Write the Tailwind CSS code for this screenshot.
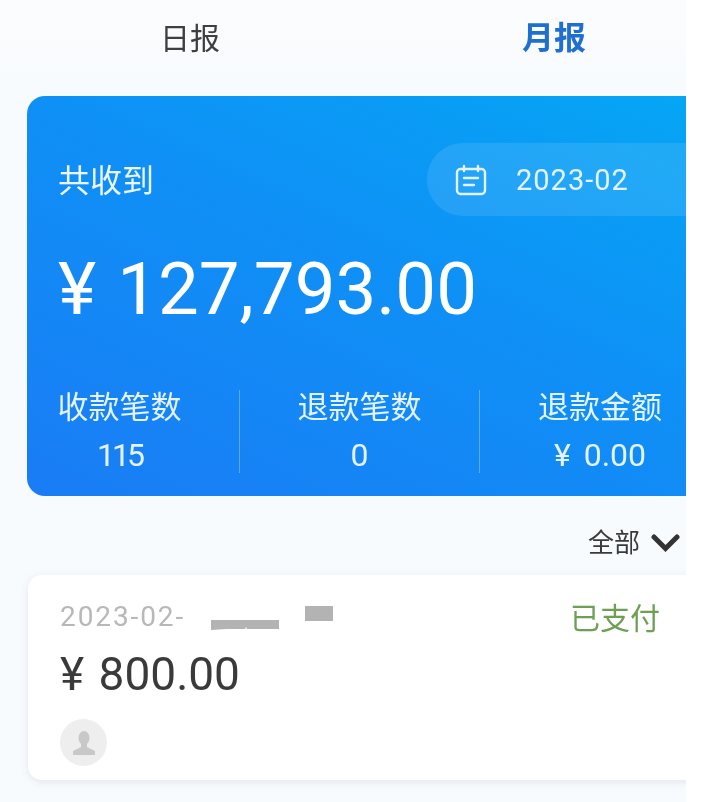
<!DOCTYPE html>
<html lang="zh-CN">
<head>
  <meta charset="UTF-8">
  <meta name="viewport" content="width=device-width, initial-scale=1.0">
  <title>月报</title>
  <script src="https://cdn.jsdelivr.net/npm/@tailwindcss/browser@4"></script>
</head>
<body class="bg-white font-['Roboto','Noto_Sans_CJK_SC',sans-serif]">
<div class="w-[686px] h-[802px] overflow-hidden bg-gradient-to-b from-[#fbfcfd] to-[#f8fbfe] to-[10%] blur-[0.5px]">

  <!-- tabs -->
  <div class="flex h-[96px] w-[728px] ml-2 pb-5">
    <div class="w-[364px] flex items-center justify-center text-[30px] text-[#3f3f3f]">日报</div>
    <div class="w-[364px] flex items-center justify-center text-[32px] font-bold text-[#1f6fd0]">月报</div>
  </div>

  <!-- summary card -->
  <div class="ml-[27px] w-[680px] h-[400px] rounded-[18px] bg-[linear-gradient(205deg,#05a6f5,#0f90f6_45%,#1a7cf5)] text-white pl-[31px] pt-[47px]">
    <div class="flex items-center justify-between h-[73px]">
      <div class="text-[32px] pt-[2px] text-[#eaf5ff]">共收到</div>
      <div class="flex items-center w-[280px] h-[73px] rounded-l-[36px] bg-white/10 pl-[28px] text-[#e4f3ff]">
        <svg class="w-[32px] h-[32px]" viewBox="0 0 32 32" fill="none" stroke="currentColor" stroke-width="2.4" stroke-linecap="round" stroke-linejoin="round">
          <rect x="2" y="5" width="28" height="25" rx="3.5"/>
          <path d="M9 2v5M23 2v5M9 14h14M9 21h10"/>
        </svg>
        <span class="ml-[29px] pt-[2px] text-[29px] tracking-[1px]">2023-02</span>
      </div>
    </div>
    <div class="mt-[30px] h-[88px] flex items-center text-[72.6px] leading-none text-white whitespace-pre [word-spacing:3px]">¥ 127,793.00</div>
    <div class="mt-[56px] -ml-[58px] flex">
      <div class="w-[240px] shrink-0 h-[83px] border-r border-white/30 flex flex-col items-center justify-between text-[#e4f3ff]">
        <div class="text-[31px] leading-[36px]">收款笔数</div>
        <div class="text-[32px] leading-[36px] tracking-[-3px]">115</div>
      </div>
      <div class="w-[240px] shrink-0 h-[83px] border-r border-white/30 flex flex-col items-center justify-between text-[#e4f3ff]">
        <div class="text-[31px] leading-[36px]">退款笔数</div>
        <div class="text-[32px] leading-[36px]">0</div>
      </div>
      <div class="w-[240px] shrink-0 h-[83px] flex flex-col items-center justify-between text-[#e4f3ff]">
        <div class="text-[31px] leading-[36px]">退款金额</div>
        <div class="text-[32px] leading-[36px] whitespace-pre [word-spacing:5px]">¥ 0.00</div>
      </div>
    </div>
  </div>

  <!-- filter -->
  <div class="h-[79px] pt-[15px] flex items-center justify-end pr-[6px] text-[#3a3a3a]">
    <span class="text-[26px]">全部</span>
    <svg class="ml-[11px] w-[29px] h-[18px]" viewBox="0 0 29 18" fill="none" stroke="#333" stroke-width="5" stroke-linecap="round" stroke-linejoin="miter">
      <path d="M3 3l11.500 11.500L26 3"/>
    </svg>
  </div>

  <!-- record -->
  <div class="ml-[28px] w-[680px] h-[205px] rounded-[14px] bg-white shadow-[0_2px_8px_rgba(150,160,175,0.22)] pl-[32px] pt-[24px]">
    <div class="flex items-start justify-between w-[600px] h-[40px]">
      <div class="flex items-start">
        <span class="text-[28px] leading-[36px] tracking-[1.9px] text-[#b8b8b8]">2023-02-</span>
        <svg class="ml-[26px] mt-[7px]" width="122" height="24" viewBox="0 0 122 24" fill="#b3b3b3">
          <path d="M0 14h68v9H36l-1-2-1 2H16L0 24z"/>
          <rect x="94" y="0" width="28" height="15"/>
        </svg>
      </div>
      <span class="text-[30px] leading-[40px] text-[#6f9f55]">已支付</span>
    </div>
    <div class="mt-[8px] h-[54px] flex items-center text-[46px] leading-none text-[#3a3a3a] whitespace-pre [word-spacing:3px]">¥ 800.00</div>
    <div class="mt-[18px] w-[47px] h-[47px] rounded-full bg-[#eeeeee] flex items-center justify-center">
      <svg width="24" height="26" viewBox="0 0 24 26" fill="#c8c8c8">
        <ellipse cx="12" cy="8" rx="5.500" ry="7"/>
        <path d="M9 14h6v3l8 4v4H1v-4l8-4z"/>
      </svg>
    </div>
  </div>
</div>
</body>
</html>
